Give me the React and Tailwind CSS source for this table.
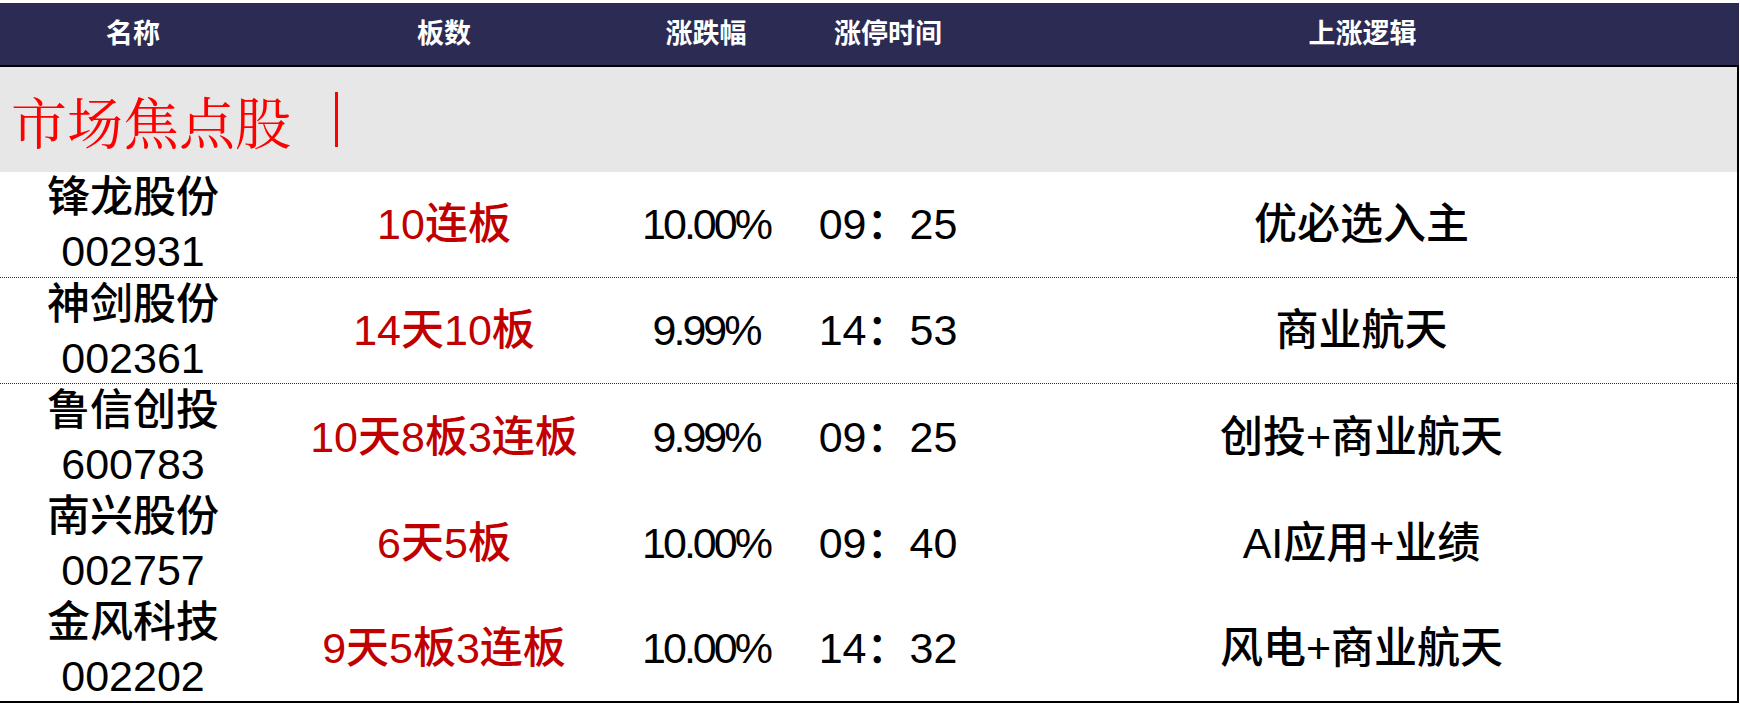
import React from "react";

const rows = [
  { name: "锋龙股份", code: "002931", board: "10连板", pct: "10.00%", time: "09：25", logic: "优必选入主", sep: true },
  { name: "神剑股份", code: "002361", board: "14天10板", pct: "9.99%", time: "14：53", logic: "商业航天", sep: true },
  { name: "鲁信创投", code: "600783", board: "10天8板3连板", pct: "9.99%", time: "09：25", logic: "创投+商业航天", sep: false },
  { name: "南兴股份", code: "002757", board: "6天5板", pct: "10.00%", time: "09：40", logic: "AI应用+业绩", sep: false },
  { name: "金风科技", code: "002202", board: "9天5板3连板", pct: "10.00%", time: "14：32", logic: "风电+商业航天", sep: false },
];

const font = { fontFamily: '"Liberation Sans", "Noto Sans CJK SC", sans-serif' };

export default function App() {
  return (
    <div className="w-[1740px] h-[705px] bg-white pt-[3px] overflow-hidden" style={font}>
      <div className="w-[1739px] h-[62px] bg-[#2c2b53] border-b-2 border-black box-content flex items-center text-white text-[27px] font-semibold">
        <div className="w-[266px] text-center">名称</div>
        <div className="w-[356px] text-center">板数</div>
        <div className="w-[168px] text-center">涨跌幅</div>
        <div className="w-[196px] text-center">涨停时间</div>
        <div className="flex-1 text-center">上涨逻辑</div>
      </div>
      <div className="w-[1737px] border-r-2 border-b-2 border-black box-content">
        <div className="h-[105px] bg-[#e7e7e7] flex items-center pl-[11px]">
          <span className="text-[56px] leading-none text-[#ff0000] font-normal" style={{ fontFamily: '"Noto Serif CJK SC", "Noto Sans CJK SC", serif' }}>市场焦点股</span>
          <span className="ml-[44px] w-[3px] h-[55px] bg-[#ff0000]" />
        </div>
        {rows.map((r, i) => (
          <div
            key={i}
            className={
              "flex items-center text-black text-[43px] font-medium " +
              (i === 0 ? "h-[106px] pb-px " : i === 4 ? "h-[105px] " : "h-[106px] ") +
              (r.sep ? "border-b border-dotted border-[#333]" : "")
            }
          >
            <div className="w-[266px] text-center leading-[54px]">
              <div>{r.name}</div>
              <div>{r.code}</div>
            </div>
            <div className="w-[356px] text-center text-[#c00000]">{r.board}</div>
            <div className="w-[168px] text-center tracking-[-3px]">{r.pct}</div>
            <div className="w-[196px] text-center">{r.time}</div>
            <div className="flex-1 text-center">{r.logic}</div>
          </div>
        ))}
      </div>
    </div>
  );
}
